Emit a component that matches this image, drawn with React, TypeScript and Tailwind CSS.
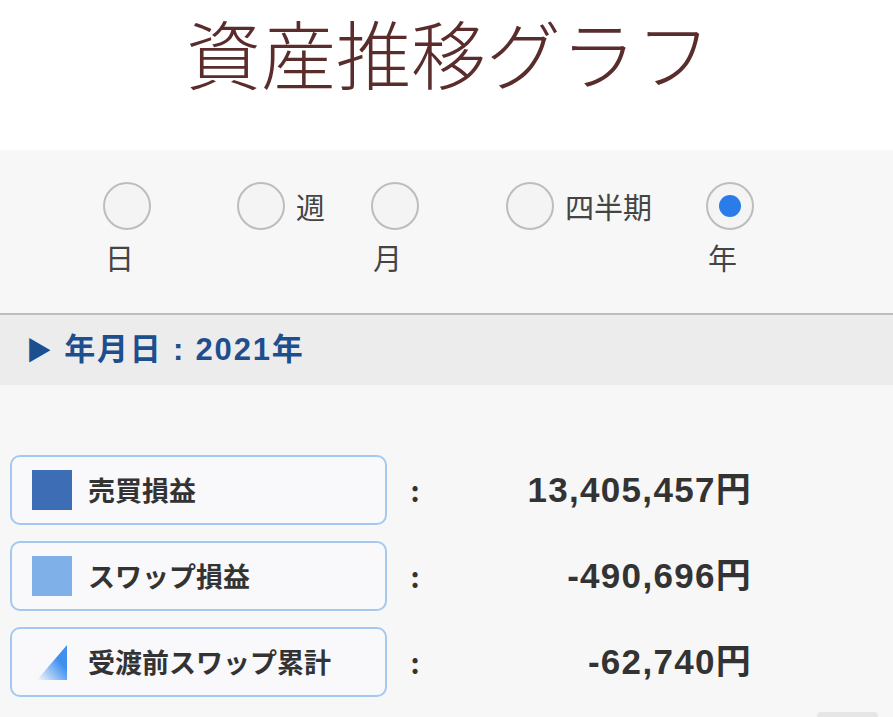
import type { ReactNode } from 'react';

const JP = { fontFamily: '"Noto Sans CJK JP", "Liberation Sans", sans-serif' };
const NUM = { fontFamily: '"Liberation Sans", "Noto Sans CJK JP", sans-serif' };

type Period = { label: string; below: boolean; width: number; checked?: boolean };

const PERIODS: Period[] = [
  { label: '日', below: true, width: 134 },
  { label: '週', below: false, width: 134 },
  { label: '月', below: true, width: 135 },
  { label: '四半期', below: false, width: 200 },
  { label: '年', below: true, width: 60, checked: true },
];

function Radio({ checked }: { checked?: boolean }) {
  return (
    <span className="flex h-[48px] w-[48px] shrink-0 items-center justify-center rounded-full border-2 border-[#bdbdbd] bg-[#f4f4f4]">
      {checked && <span className="h-[22px] w-[22px] rounded-full bg-[#2a7de8]" />}
    </span>
  );
}

function Swatch({ kind }: { kind: 'dark' | 'light' | 'tri' }) {
  if (kind === 'dark') return <span className="h-[40px] w-[40px] bg-[#3d6db5]" />;
  if (kind === 'light') return <span className="h-[40px] w-[40px] bg-[#7fb0e8]" />;
  return (
    <svg width="40" height="40" viewBox="0 0 40 40">
      <defs>
        <linearGradient id="tri" x1="1" y1="0" x2="0" y2="1">
          <stop offset="0.35" stopColor="#3f8ff0" />
          <stop offset="1" stopColor="#3f8ff0" stopOpacity="0" />
        </linearGradient>
      </defs>
      <polygon points="35,3 35,38 5,38" fill="url(#tri)" />
    </svg>
  );
}

function Row({ swatch, label, value }: { swatch: ReactNode; label: string; value: string }) {
  return (
    <div className="flex h-[70px] items-center">
      <div className="ml-[10px] flex h-[70px] w-[377px] items-center gap-[16px] rounded-[10px] border-2 border-[#a3c9f1] bg-[#f9f9fb] pl-[20px]">
        {swatch}
        <span className="text-[27px] font-semibold text-[#333]" style={JP}>{label}</span>
      </div>
      <span className="w-[56px] text-center text-[28px] font-bold text-[#333]" style={JP}>:</span>
      <span className="w-[309px] text-right text-[35px] font-bold tracking-[1.3px] text-[#333]" style={NUM}>
        {value}
      </span>
    </div>
  );
}

export default function App() {
  return (
    <div className="min-h-[717px] w-[893px] overflow-hidden bg-[#f7f7f7]">
      <div className="flex h-[150px] items-start justify-center bg-white">
        <h1 className="whitespace-nowrap pl-[4px] text-[75px] font-light leading-[104px] text-[#5a2c2c]" style={JP}>
          資産推移グラフ
        </h1>
      </div>

      <div className="flex h-[163px] items-start pl-[103px] pt-[32px]">
        {PERIODS.map((p) => (
          <div
            key={p.label}
            className={p.below ? 'flex shrink-0 flex-col items-start' : 'flex shrink-0 items-center'}
            style={{ width: p.width }}
          >
            <Radio checked={p.checked} />
            <span
              className={
                p.below
                  ? 'mt-[9px] pl-[2px] text-[29px] leading-[36px] text-[#444]'
                  : 'ml-[11px] text-[29px] leading-[36px] text-[#444]'
              }
              style={JP}
            >
              {p.label}
            </span>
          </div>
        ))}
      </div>

      <div className="flex h-[72px] items-center border-t-2 border-[#bdbdbd] bg-[#ececec] pl-[26px]">
        <span className="text-[31px] font-bold tracking-[1.8px] text-[#1d4f8f]" style={NUM}>
          <span className="text-[26px]">▶</span> 年月日 : 2021年
        </span>
      </div>

      <div className="flex flex-col gap-[16px] pt-[70px]">
        <Row swatch={<Swatch kind="dark" />} label="売買損益" value="13,405,457円" />
        <Row swatch={<Swatch kind="light" />} label="スワップ損益" value="-490,696円" />
        <Row swatch={<Swatch kind="tri" />} label="受渡前スワップ累計" value="-62,740円" />
      </div>

      <div className="ml-[817px] mt-[15px] h-[10px] w-[61px] rounded-t bg-[#e6e6e6]" />
    </div>
  );
}
